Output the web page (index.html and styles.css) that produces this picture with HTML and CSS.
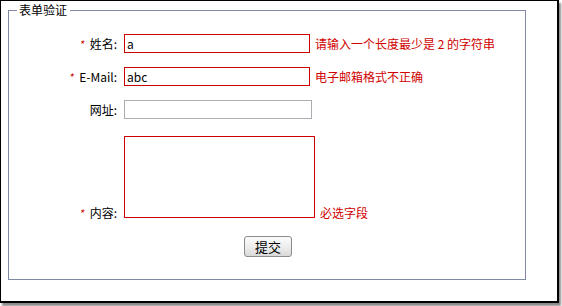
FILE: index.html
```html
<!DOCTYPE html>
<html lang="zh-CN">
<head>
<meta charset="utf-8">
<title>表单验证</title>
<link rel="stylesheet" href="styles.css">
</head>
<body>
<div class="frame">
  <fieldset class="box">
    <legend class="box-title">表单验证</legend>
    <form class="form">
      <label class="lbl"><span class="req">*</span>姓名:</label>
      <div class="field">
        <input class="inp inp-err" type="text" value="a">
        <span class="msg">请输入一个长度最少是 2 的字符串</span>
      </div>

      <label class="lbl"><span class="req">*</span>E-Mail:</label>
      <div class="field">
        <input class="inp inp-err" type="text" value="abc">
        <span class="msg">电子邮箱格式不正确</span>
      </div>

      <label class="lbl">网址:</label>
      <div class="field">
        <input class="inp inp-url" type="text" value="">
      </div>

      <label class="lbl lbl-bottom row-area"><span class="req">*</span>内容:</label>
      <div class="field field-bottom row-area">
        <textarea class="area"></textarea>
        <span class="msg msg-bottom">必选字段</span>
      </div>

      <div class="actions">
        <button class="btn" type="button">提交</button>
      </div>
    </form>
  </fieldset>
</div>
</body>
</html>
```

FILE: styles.css
```css
html, body {
  margin: 0;
  padding: 0;
  background: #ffffff;
}

body {
  font-family: "Noto Sans CJK SC", "DejaVu Sans", sans-serif;
  font-size: 12px;
  color: #000;
  width: 562px;
  height: 306px;
  overflow: hidden;
}

.frame {
  box-sizing: border-box;
  width: 559px;
  height: 303px;
  border: 1px solid #000;
  border-right-width: 2px;
  border-bottom-width: 2px;
  box-shadow: 2px 3px 2px #8a8a8a;
  padding: 2px 0 0 7px;
  background: #fff;
}

.box {
  box-sizing: border-box;
  width: 518px;
  margin: 0;
  padding: 0 0 22px 0;
  border: 1px solid #7d8aa2;
}

.box-title {
  margin-left: 8px;
  padding: 0 3px 0 2px;
  font-size: 12px;
  line-height: 14px;
}

.form {
  display: grid;
  grid-template-columns: 115px 1fr;
  row-gap: 14px;
  padding-top: 17px;
  margin: 0;
}

.lbl {
  align-self: center;
  text-align: right;
  padding-right: 7px;
  line-height: 14px;
  white-space: nowrap;
}

.req {
  color: #cc0000;
  font-size: 11px;
  font-style: italic;
  margin-right: 6px;
}

.field {
  display: flex;
  align-items: center;
  gap: 5px;
}

.inp {
  box-sizing: border-box;
  height: 19px;
  margin: 0;
  padding: 0 2px;
  font-family: "Noto Sans CJK SC", "DejaVu Sans", sans-serif;
  font-size: 12px;
  color: #000;
  background: #fff;
  outline: none;
}

.inp-err {
  width: 186px;
  border: 1px solid #cc0000;
}

.inp-url {
  width: 188px;
  border: 1px solid #abadb3;
}

.msg {
  color: #d00000;
  white-space: nowrap;
  line-height: 14px;
}

.row-area {
  margin-top: 3px;
}

.lbl-bottom {
  align-self: end;
  margin-bottom: -2px;
}

.field-bottom {
  align-items: flex-end;
}

.msg-bottom {
  margin-bottom: -2px;
}

.area {
  box-sizing: border-box;
  width: 191px;
  height: 82px;
  margin: 0;
  padding: 1px 2px;
  border: 1px solid #cc0000;
  resize: none;
  outline: none;
  font-family: "Noto Sans CJK SC", "DejaVu Sans", sans-serif;
  font-size: 12px;
  display: block;
}

.actions {
  grid-column: 1 / -1;
  display: flex;
  justify-content: center;
  margin-top: 4px;
}

.btn {
  box-sizing: border-box;
  width: 48px;
  height: 21px;
  margin: 0 0 0 2px;
  padding: 0;
  border: 1px solid #8c8c8c;
  border-radius: 3px;
  background: linear-gradient(#fbfbfb 0%, #eeeeee 50%, #d9d9d9 100%);
  font-family: "Noto Sans CJK SC", "DejaVu Sans", sans-serif;
  font-size: 13px;
  line-height: 18px;
  color: #000;
}
```
